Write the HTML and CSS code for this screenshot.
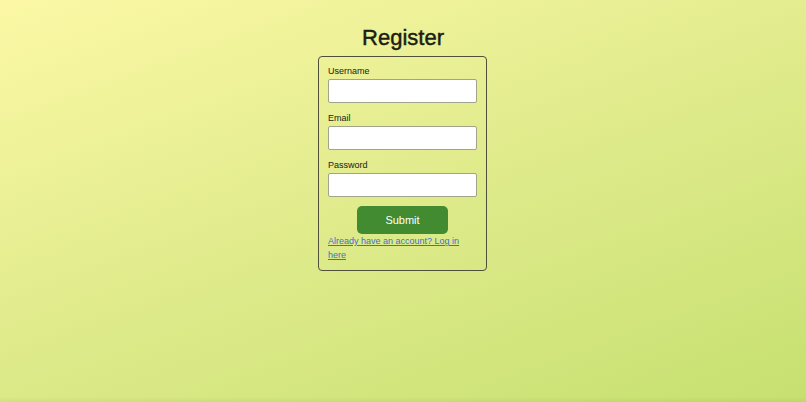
FILE: index.html
```html
<!DOCTYPE html>
<html lang="en">
<head>
<meta charset="utf-8">
<title>Register</title>
<link rel="stylesheet" href="styles.css">
</head>
<body>
<main class="page">
  <h1 class="title">Register</h1>
  <form class="card">
    <div class="field">
      <label class="label" for="username">Username</label>
      <input class="input" id="username" type="text">
    </div>
    <div class="field">
      <label class="label" for="email">Email</label>
      <input class="input" id="email" type="email">
    </div>
    <div class="field">
      <label class="label" for="password">Password</label>
      <input class="input" id="password" type="password">
    </div>
    <div class="actions">
      <button class="submit" type="button">Submit</button>
    </div>
    <a class="login-link" href="#">Already have an account? Log in here</a>
  </form>
</main>
</body>
</html>
```
FILE: styles.css
```css
html, body {
  margin: 0;
  padding: 0;
  height: 100%;
}
body {
  font-family: "Liberation Sans", Arial, sans-serif;
  background:
    linear-gradient(to top, rgba(90, 100, 20, 0.08) 0, rgba(90, 100, 20, 0) 5px),
    linear-gradient(160deg, #fcf8a5 0%, #e2ec8e 45%, #c6e070 100%);
  color: #222;
}
.page {
  display: flex;
  flex-direction: column;
  align-items: center;
}
.title {
  margin: 25px 0 5px;
  font-size: 22px;
  line-height: 26px;
  font-weight: 500;
  color: #1a1d14;
  -webkit-text-stroke: 0.45px #1a1d14;
}
.card {
  box-sizing: border-box;
  width: 169px;
  margin-right: 1px;
  padding: 9px 9px 8px;
  border: 1px solid #4f4f3a;
  border-radius: 4px;
  display: flex;
  flex-direction: column;
}
.field {
  display: flex;
  flex-direction: column;
  margin-bottom: 10px;
}
.field:nth-child(3) {
  margin-bottom: 9px;
}
.label {
  font-size: 9px;
  line-height: 11px;
  margin-bottom: 2px;
  color: #262a1e;
  -webkit-text-stroke: 0.05px #262a1e;
}
.input {
  box-sizing: border-box;
  width: 100%;
  height: 24px;
  margin: 0;
  border: 1px solid #a1a38a;
  border-radius: 2px;
  background: #fff;
  font-size: 10px;
}
.actions {
  display: flex;
  justify-content: center;
  margin-bottom: 1px;
}
.submit {
  width: 91px;
  height: 28px;
  border: none;
  border-radius: 5px;
  background: #438b31;
  color: #fff;
  font-family: "Liberation Sans", Arial, sans-serif;
  font-size: 11px;
  padding: 0;
}
.login-link {
  font-size: 9px;
  line-height: 13.5px;
  color: #3d6fd2;
  text-decoration: underline;
}
```
